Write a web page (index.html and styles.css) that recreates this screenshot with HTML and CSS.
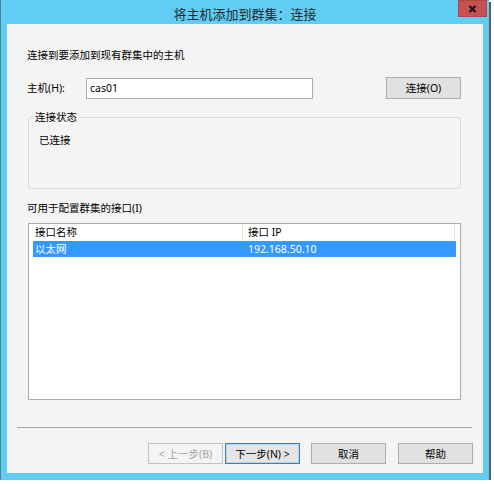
FILE: index.html
```html
<!DOCTYPE html>
<html lang="zh-CN">
<head>
<meta charset="utf-8">
<title>将主机添加到群集: 连接</title>
<link rel="stylesheet" href="styles.css">
</head>
<body>
<div class="window">
  <div class="titlebar">
    <span></span>
    <span class="title">将主机添加到群集：连接</span>
    <span class="close"><svg width="9" height="8" viewBox="0 0 9 8"><path d="M1.5 1 L7.5 7 M7.5 1 L1.5 7" stroke="#1a1a1a" stroke-width="2.2" fill="none"/></svg></span>
  </div>
  <div class="content">
    <div class="heading">连接到要添加到现有群集中的主机</div>
    <div class="host-row">
      <span class="label">主机(H):</span>
      <div class="textbox">cas01</div>
      <button class="btn connect">连接(O)</button>
    </div>
    <fieldset class="group">
      <legend>连接状态</legend>
      <div class="status">已连接</div>
    </fieldset>
    <div class="list-label">可用于配置群集的接口(I)</div>
    <div class="listbox">
      <div class="lv-row lv-head">
        <div class="c1">接口名称</div>
        <div class="c2">接口 IP</div>
      </div>
      <div class="lv-row lv-sel">
        <div class="c1">以太网</div>
        <div class="c2">192.168.50.10</div>
      </div>
    </div>
    <div class="sep"></div>
    <div class="buttons">
      <div class="pair">
        <button class="btn disabled">&lt; 上一步(B)</button>
        <button class="btn default">下一步(N) &gt;</button>
      </div>
      <button class="btn">取消</button>
      <button class="btn">帮助</button>
    </div>
  </div>
</div>
</body>
</html>
```
FILE: styles.css
```css
html, body {
  margin: 0;
  padding: 0;
  background: #ffffff;
}
body {
  font-family: "Noto Sans", "Noto Sans CJK SC", sans-serif;
  font-size: 10.5px;
  color: #000;
}
.window {
  width: 488px;
  height: 480px;
  background: #62cdf2;
  border-left: 1px solid #4f8299;
  box-shadow: 2px 2px 0 #5a5f63;
  display: flex;
  flex-direction: column;
}
.titlebar {
  height: 24px;
  display: grid;
  grid-template-columns: 1fr auto 1fr;
  align-items: start;
}
.title {
  font-family: "Noto Sans CJK SC", sans-serif;
  font-size: 13px;
  line-height: 28px;
  color: #1e2a30;
}
.close {
  justify-self: end;
  margin-right: 2px;
  width: 29px;
  height: 17px;
  background: #c75050;
  box-shadow: inset 0 0 0 1px #b04545;
  display: flex;
  align-items: center;
  justify-content: center;
}
.content {
  margin: 0 6px 7px 6px;
  height: 449px;
  background: #f4f4f4;
  box-sizing: border-box;
  padding: 24px 10px 0 20px;
  display: flex;
  flex-direction: column;
}
.heading {
  line-height: 14px;
}
.host-row {
  margin-top: 15px;
  height: 22px;
  display: flex;
  align-items: center;
}
.label {
  width: 59px;
  line-height: 14px;
}
.textbox {
  width: 222px;
  height: 19px;
  border: 1px solid #abadb3;
  background: #fff;
  line-height: 19px;
  padding-left: 3px;
  box-sizing: content-box;
  margin-top: 1px;
}
.btn {
  font-family: "Noto Sans", "Noto Sans CJK SC", sans-serif;
  font-size: 10.5px;
  color: #000;
  background: #e1e1e1;
  border: 1px solid #adadad;
  width: 75px;
  height: 21px;
  padding: 0;
  margin: 0;
  line-height: 18px;
}
.connect {
  margin-left: auto;
  margin-right: 12px;
  height: 22px;
}
.group {
  margin: 11px 0 0 1px;
  width: 433px;
  box-sizing: border-box;
  border: 1px solid #d9d9d9;
  border-radius: 3px;
  padding: 0 10px 41px 10px;
}
.group legend {
  margin-left: -6px;
  padding: 0 2px;
  line-height: 14px;
}
.status {
  margin-top: 9px;
  line-height: 14px;
}
.list-label {
  margin-top: 12px;
  line-height: 14px;
}
.listbox {
  margin: 8px 0 0 1px;
  width: 433px;
  height: 177px;
  box-sizing: border-box;
  border: 1px solid #acacac;
  background: #fff;
  padding: 0 4px;
}
.lv-row {
  display: flex;
  height: 16px;
  line-height: 16px;
}
.lv-row .c1 {
  width: 209px;
  padding-left: 2px;
  box-sizing: border-box;
}
.lv-row .c2 {
  flex: 1;
  padding-left: 6px;
}
.lv-head .c1 {
  border-right: 1px solid #e5e5e5;
  width: 210px;
}
.lv-head .c2 {
  padding-left: 5px;
  border-right: 1px solid #e5e5e5;
}
.lv-head {
  margin-right: 1px;
}
.lv-sel {
  margin-top: 1px;
  background: #3399ff;
  color: #fff;
}
.sep {
  margin: 27px 0 0 -10px;
  width: 455px;
  height: 1px;
  background: #a6a6a6;
}
.buttons {
  margin-top: 15px;
  display: flex;
  justify-content: flex-end;
  gap: 12px;
}
.pair {
  display: flex;
  gap: 2px;
  margin-right: -1px;
}
.btn.disabled {
  background: #f4f4f4;
  border-color: #c3c3c3;
  color: #a3a3a3;
}
.btn.default {
  border-color: #3c7fb1;
  box-shadow: inset 0 0 0 1px #b9d4ea;
  background: #e5e5e5;
}
```
